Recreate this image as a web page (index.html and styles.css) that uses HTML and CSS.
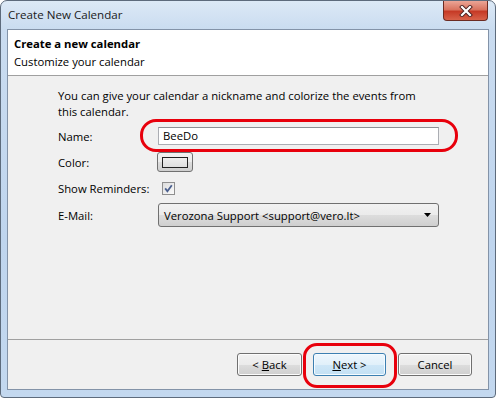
FILE: index.html
```html
<!DOCTYPE html>
<html>
<head>
<meta charset="utf-8">
<link rel="stylesheet" href="styles.css">
</head>
<body>
<div class="window">
  <div class="titlebar">
    <span class="title">Create New Calendar</span>
    <div class="close">
      <svg width="14" height="12" viewBox="0 0 14 12">
        <path d="M3 2 L11 10 M11 2 L3 10" stroke="#4a2020" stroke-width="4" stroke-linecap="square"/>
        <path d="M3 2 L11 10 M11 2 L3 10" stroke="#ffffff" stroke-width="2.2" stroke-linecap="square"/>
      </svg>
    </div>
  </div>
  <div class="client">
    <div class="header">
      <div class="h-title">Create a new calendar</div>
      <div class="h-sub">Customize your calendar</div>
    </div>
    <div class="body">
      <p class="intro">You can give your calendar a nickname and colorize the events from this calendar.</p>
      <div class="form">
        <span class="label">Name:</span>
        <div class="textbox">BeeDo</div>
        <span class="label">Color:</span>
        <div class="colorbtn"><span class="swatch"></span></div>
        <span class="label">Show Reminders:</span>
        <div class="checkbox">
          <svg width="13" height="13" viewBox="0 0 13 13">
            <path d="M3.2 6.4 L5.4 9.2 L9.8 3.2" fill="none" stroke="#4a5f8e" stroke-width="1.8"/>
          </svg>
        </div>
        <span class="label">E-Mail:</span>
        <div class="dropdown">
          <span>Verozona Support &lt;support@vero.lt&gt;</span>
          <svg width="7" height="4" viewBox="0 0 7 4"><path d="M0 0 H7 L3.5 4 Z" fill="#000"/></svg>
        </div>
      </div>
    </div>
    <div class="footer">
      <button class="btn btn-back">&lt; <u>B</u>ack</button>
      <button class="btn btn-next"><u>N</u>ext &gt;</button>
      <button class="btn btn-cancel">Cancel</button>
    </div>
  </div>
  <div class="mark mark-name"></div>
  <div class="mark mark-next"></div>
</div>
</body>
</html>
```
FILE: styles.css
```css
html, body {
  margin: 0;
  padding: 0;
  background: #ffffff;
}

.window {
  position: relative;
  width: 496px;
  height: 398px;
  box-sizing: border-box;
  border: 1px solid #5d6b7c;
  border-radius: 7px 7px 4px 4px;
  background: linear-gradient(180deg, #dce9f6 0px, #cadcf0 28px, #bfd5ee 60%, #c3d8ef 100%);
  padding: 0 6px 7px 6px;
  display: flex;
  flex-direction: column;
  font-family: "Open Sans", "Noto Sans", sans-serif;
  font-size: 11.3px;
  color: #000;
}

.titlebar {
  height: 28px;
  display: flex;
  justify-content: space-between;
  align-items: flex-start;
  flex: none;
}

.title {
  padding-left: 1px;
  padding-top: 6px;
  line-height: 16px;
  font-size: 11.6px;
  color: #1a1a1a;
}

.close {
  width: 45px;
  height: 20px;
  margin-right: 1px;
  box-sizing: border-box;
  border: 1px solid #6b2b22;
  border-top: none;
  border-radius: 0 0 4px 4px;
  background: linear-gradient(180deg, #eba596 0%, #d97460 45%, #c63a26 55%, #d8624a 100%);
  display: flex;
  align-items: center;
  justify-content: center;
}

.client {
  flex: 1;
  border: 1px solid #8393a8;
  background: #f0f0f0;
  display: flex;
  flex-direction: column;
}

.header {
  background: #ffffff;
  border-bottom: 1px solid #a0a0a0;
  padding: 5px 6px 4px 6px;
  line-height: 18px;
}

.h-title {
  font-weight: bold;
}

.body {
  flex: 1;
  padding: 12px 0 0 50px;
}

.intro {
  margin: 0;
  width: 362px;
  line-height: 16px;
}

.form {
  margin-top: 3px;
  display: grid;
  grid-template-columns: 100px auto;
  grid-template-rows: 26px 26px 26px 28px;
  align-items: center;
  justify-items: start;
}

.textbox {
  width: 281px;
  height: 18px;
  box-sizing: border-box;
  border: 1px solid #abadb3;
  border-top-color: #8d9095;
  background: #ffffff;
  padding-left: 4px;
  line-height: 16px;
}

.colorbtn {
  width: 36px;
  height: 20px;
  margin-left: -1px;
  box-sizing: border-box;
  border: 1px solid #707070;
  border-radius: 3px;
  background: linear-gradient(180deg, #f2f2f2 0%, #ebebeb 50%, #dddddd 50%, #cfcfcf 100%);
  display: flex;
  align-items: center;
  justify-content: center;
}

.swatch {
  width: 26px;
  height: 11px;
  box-sizing: border-box;
  border: 1px solid #222;
  background: linear-gradient(180deg, #eeeeee, #dedede);
}

.checkbox {
  width: 13px;
  height: 13px;
  margin-left: 4px;
  box-sizing: border-box;
  border: 1px solid #8f8f8f;
  background: linear-gradient(135deg, #dcdcdc, #fbfbfb);
  display: flex;
  align-items: center;
  justify-content: center;
}

.checkbox svg {
  flex: none;
}

.dropdown {
  width: 281px;
  height: 24px;
  box-sizing: border-box;
  border: 1px solid #707070;
  border-radius: 3px;
  background: linear-gradient(180deg, #f2f2f2 0%, #ebebeb 50%, #dddddd 50%, #cfcfcf 100%);
  display: flex;
  align-items: center;
  justify-content: space-between;
  padding: 0 7px 0 5px;
}

.footer {
  flex: none;
  height: 50px;
  box-sizing: border-box;
  border-top: 1px solid #a0a0a0;
  padding: 13px 16px 0 0;
  display: flex;
  justify-content: flex-end;
  align-items: flex-start;
}

.btn {
  height: 23px;
  box-sizing: border-box;
  border: 1px solid #707070;
  border-radius: 3px;
  background: linear-gradient(180deg, #f2f2f2 0%, #ebebeb 50%, #dddddd 50%, #cfcfcf 100%);
  box-shadow: inset 0 0 0 1px #fcfcfc;
  font-family: inherit;
  font-size: 11.3px;
  color: #000;
  padding: 0;
}

.btn u {
  text-decoration: underline;
}

.btn-back {
  width: 65px;
}

.btn-next {
  width: 73px;
  margin-left: 11px;
  border-color: #3c7fb1;
  background: linear-gradient(180deg, #eef7fd 0%, #e1f0fa 50%, #cfe7f7 50%, #c3e0f4 100%);
  box-shadow: inset 0 0 0 1px #f4fbff;
}

.btn-cancel {
  width: 74px;
  margin-left: 12px;
}

.mark {
  position: absolute;
  box-sizing: border-box;
  border: 3px solid #e8000c;
}

.mark-name {
  left: 139px;
  top: 118px;
  width: 318px;
  height: 33px;
  border-radius: 16px;
}

.mark-next {
  left: 302px;
  top: 342px;
  width: 94px;
  height: 45px;
  border-radius: 14px;
}
```
